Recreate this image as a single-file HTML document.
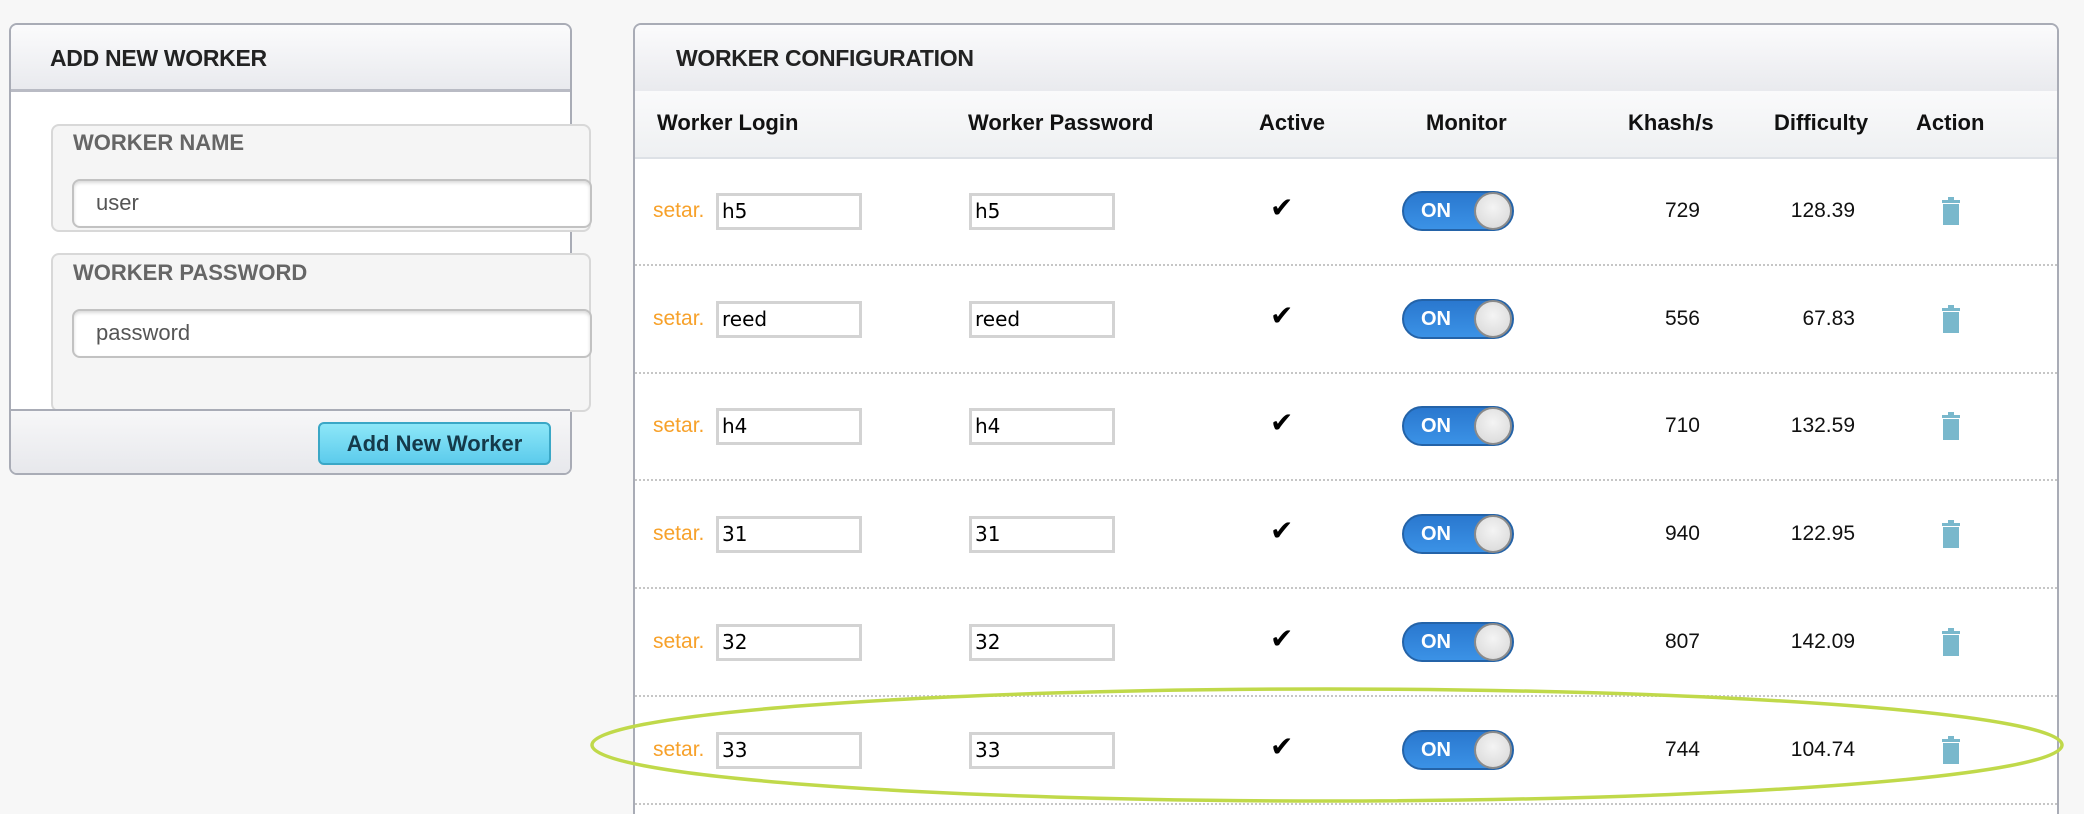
<!DOCTYPE html>
<html style="overflow:hidden;height:814px"><head><meta charset="utf-8"><style>
body{margin:0;width:2084px;height:814px;background:#f7f7f7;position:relative;overflow:hidden;font-family:"Liberation Sans",Arial,sans-serif}
.a{position:absolute}
.panel{position:absolute;background:#fff;border:2px solid #a9acb6;border-radius:8px;box-sizing:border-box}
.hdr{position:absolute;left:0;right:0;top:0;height:66px;background:linear-gradient(#fbfbfc,#e9eaee);border-bottom:3px solid #b9bbc4;border-radius:6px 6px 0 0}
.title{position:absolute;font-weight:bold;font-size:23px;color:#222;letter-spacing:-0.3px}
.fs{position:absolute;background:#f5f5f5;border:2px solid #d8d8d8;border-radius:8px;box-sizing:border-box}
.lbl{position:absolute;font-weight:bold;font-size:22px;color:#666}
.inp{position:absolute;background:#fff;border:2px solid #c2c2c2;border-radius:8px;box-sizing:border-box;box-shadow:inset 0 2px 3px rgba(0,0,0,.15);font-size:22px;color:#555;padding-left:22px;line-height:44px}
.th{position:absolute;top:110px;font-weight:bold;font-size:22px;color:#111}
.ti{position:absolute;width:146px;height:37px;border:3px solid #d3d3d3;box-sizing:border-box;background:#fff;font-family:"DejaVu Sans",sans-serif;font-size:20px;line-height:31px;padding-left:3px;color:#000}
.dot{position:absolute;left:0;right:0;height:0;border-top:2px dotted #c6c6c6}
.tog{position:absolute;width:112px;height:40px;border-radius:20px;background:linear-gradient(#2a78cf,#3b92e6);border:2px solid #2463a8;box-sizing:border-box}
.tog span{position:absolute;left:17px;top:7px;color:#fff;font-weight:bold;font-size:20px}
.tog i{position:absolute;right:0;top:-1px;width:38px;height:38px;border-radius:50%;background:radial-gradient(circle at 50% 40%,#f4f4f4,#d6d6d6);border:2px solid #8a8a8a;box-sizing:border-box}
.num{position:absolute;font-size:21px;color:#111;text-align:right}
.ck{position:absolute;left:1270px;top:190px;font-family:"DejaVu Sans",sans-serif;font-weight:bold;font-size:28px}
</style></head><body>

<div class="panel" style="left:9px;top:23px;width:563px;height:452px">
 <div class="hdr" style="height:64px"></div>
 <div class="title" style="left:39px;top:20px">ADD NEW WORKER</div>
 <div class="fs" style="left:40px;top:99px;width:540px;height:108px"></div>
 <div class="lbl" style="left:62px;top:105px">WORKER NAME</div>
 <div class="inp" style="left:61px;top:154px;width:520px;height:49px">user</div>
 <div class="fs" style="left:40px;top:228px;width:540px;height:159px"></div>
 <div class="lbl" style="left:62px;top:235px">WORKER PASSWORD</div>
 <div class="inp" style="left:61px;top:284px;width:520px;height:49px">password</div>
 <div class="a" style="left:0;right:0;top:384px;bottom:0;background:linear-gradient(#f7f7f8,#e7e8ec);border-top:2px solid #a9acb6;border-radius:0 0 6px 6px"></div>
 <div class="a" style="left:307px;top:397px;width:233px;height:43px;border:2px solid #3aa7c6;border-radius:6px;box-sizing:border-box;background:linear-gradient(#8de7f8,#5ccbec);font-weight:bold;font-size:22px;color:#153a4a;text-align:center;line-height:39px">Add New Worker</div>
</div>

<div class="panel" style="left:633px;top:23px;width:1426px;height:791px;border-bottom:none;border-radius:8px 8px 0 0">
 <div class="hdr"></div>
 <div class="title" style="left:41px;top:20px">WORKER CONFIGURATION</div>
 <div class="a" style="left:0;right:0;top:66px;height:66px;background:linear-gradient(#fafafb,#eef0f2);border-bottom:2px solid #dde1e6"></div>
</div>
<div class="th" style="left:657px">Worker Login</div>
<div class="th" style="left:968px">Worker Password</div>
<div class="th" style="left:1259px">Active</div>
<div class="th" style="left:1426px">Monitor</div>
<div class="th" style="left:1628px">Khash/s</div>
<div class="th" style="left:1774px">Difficulty</div>
<div class="th" style="left:1916px">Action</div>

<div class="a" style="left:635px;top:264px;width:1422px;height:545px">
 <div class="dot" style="top:0"></div>
 <div class="dot" style="top:108px"></div>
 <div class="dot" style="top:215px"></div>
 <div class="dot" style="top:323px"></div>
 <div class="dot" style="top:431px"></div>
 <div class="dot" style="top:539px"></div>
</div>

<div class="a" style="left:0;top:1px">
 <div class="a" style="left:653px;top:198px;color:#f7a12a;font-size:21px">setar.</div><div class="ti" style="left:716px;top:192px">h5</div><div class="ti" style="left:969px;top:192px">h5</div><div class="ck">✔</div><div class="tog" style="left:1402px;top:190px"><span>ON</span><i></i></div><div class="num" style="left:1600px;top:198px;width:100px">729</div><div class="num" style="left:1755px;top:198px;width:100px">128.39</div>
</div>
<div class="a" style="left:0;top:109px">
 <div class="a" style="left:653px;top:198px;color:#f7a12a;font-size:21px">setar.</div><div class="ti" style="left:716px;top:192px">reed</div><div class="ti" style="left:969px;top:192px">reed</div><div class="ck">✔</div><div class="tog" style="left:1402px;top:190px"><span>ON</span><i></i></div><div class="num" style="left:1600px;top:198px;width:100px">556</div><div class="num" style="left:1755px;top:198px;width:100px">67.83</div>
</div>
<div class="a" style="left:0;top:216px">
 <div class="a" style="left:653px;top:198px;color:#f7a12a;font-size:21px">setar.</div><div class="ti" style="left:716px;top:192px">h4</div><div class="ti" style="left:969px;top:192px">h4</div><div class="ck">✔</div><div class="tog" style="left:1402px;top:190px"><span>ON</span><i></i></div><div class="num" style="left:1600px;top:198px;width:100px">710</div><div class="num" style="left:1755px;top:198px;width:100px">132.59</div>
</div>
<div class="a" style="left:0;top:324px">
 <div class="a" style="left:653px;top:198px;color:#f7a12a;font-size:21px">setar.</div><div class="ti" style="left:716px;top:192px">31</div><div class="ti" style="left:969px;top:192px">31</div><div class="ck">✔</div><div class="tog" style="left:1402px;top:190px"><span>ON</span><i></i></div><div class="num" style="left:1600px;top:198px;width:100px">940</div><div class="num" style="left:1755px;top:198px;width:100px">122.95</div>
</div>
<div class="a" style="left:0;top:432px">
 <div class="a" style="left:653px;top:198px;color:#f7a12a;font-size:21px">setar.</div><div class="ti" style="left:716px;top:192px">32</div><div class="ti" style="left:969px;top:192px">32</div><div class="ck">✔</div><div class="tog" style="left:1402px;top:190px"><span>ON</span><i></i></div><div class="num" style="left:1600px;top:198px;width:100px">807</div><div class="num" style="left:1755px;top:198px;width:100px">142.09</div>
</div>
<div class="a" style="left:0;top:540px">
 <div class="a" style="left:653px;top:198px;color:#f7a12a;font-size:21px">setar.</div><div class="ti" style="left:716px;top:192px">33</div><div class="ti" style="left:969px;top:192px">33</div><div class="ck">✔</div><div class="tog" style="left:1402px;top:190px"><span>ON</span><i></i></div><div class="num" style="left:1600px;top:198px;width:100px">744</div><div class="num" style="left:1755px;top:198px;width:100px">104.74</div>
</div>

<svg class="a" style="left:0;top:0" width="2084" height="814">
 <g fill="#79b8cc">
  <g id="t"><rect x="1942" y="200" width="18" height="3"/><rect x="1948" y="197" width="6" height="3"/><rect x="1943" y="204" width="16" height="21"/></g>
  <use href="#t" y="108"/><use href="#t" y="215"/><use href="#t" y="323"/><use href="#t" y="431"/><use href="#t" y="539"/>
 </g>
 <ellipse cx="1327" cy="745" rx="735" ry="56" fill="none" stroke="#c0d94a" stroke-width="3.5"/>
</svg>
</body></html>
